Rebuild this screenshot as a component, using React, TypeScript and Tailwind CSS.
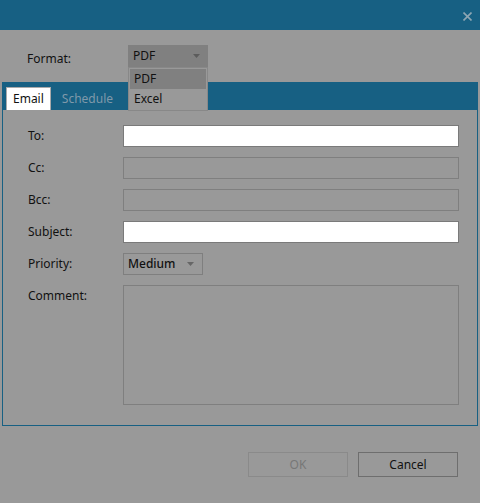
import { useState } from "react";

const fieldRow = "flex items-center h-[22px]";
const label = "w-[95px] shrink-0 text-[12px] text-[#111]";

export default function App() {
  const [format, setFormat] = useState("PDF");
  const [open, setOpen] = useState(true);

  return (
    <div
      className="relative h-[503px] w-[480px] overflow-hidden bg-[#999999] text-[12px] text-[#111]"
      style={{ fontFamily: '"Noto Sans", "Open Sans", sans-serif' }}
    >
      {/* title bar */}
      <div className="flex h-[30px] items-center justify-end bg-[#176083] pr-[8px]">
        <svg width="9" height="9" viewBox="0 0 9 9" className="mt-[2px]">
          <path d="M0.5 0.5 L8.5 8.5 M8.5 0.5 L0.5 8.5" stroke="#8ea6b3" strokeWidth="1.6" />
        </svg>
      </div>

      {/* format row */}
      <div className="relative z-10 mt-[15px] flex h-[22px]">
        <span className="h-[22px] w-[128px] shrink-0 pl-[27px] leading-[28px]">Format:</span>
        <div className="relative">
          <button
            onClick={() => setOpen((v) => !v)}
            className="flex h-[22px] w-[80px] items-center justify-between bg-[#808080] pl-[5px] pr-[8px] text-left"
          >
            <span>{format}</span>
            <svg width="7" height="4" viewBox="0 0 7 4">
              <path d="M0 0 H7 L3.5 4 Z" fill="#5c5c5c" />
            </svg>
          </button>
          {open ? (
            <div className="absolute left-0 top-[22px] w-[80px] border border-[#888] bg-[#999999] p-[1px]">
              {["PDF", "Excel"].map((item) => (
                <div
                  key={item}
                  onClick={() => {
                    setFormat(item);
                    setOpen(false);
                  }}
                  className={`flex h-[20px] cursor-default items-center pl-[4px] ${item === format ? "bg-[#808080]" : ""}`}
                >
                  {item}
                </div>
              ))}
            </div>
          ) : null}
        </div>
      </div>

      {/* tabs panel */}
      <div className="mx-[2px] mt-[15px] flex h-[344px] flex-col border border-[#176083]">
        <div className="flex h-[27px] shrink-0 items-end bg-[#176083] pl-[3px]">
          <div className="flex h-[23px] items-center border border-[#aaa] border-b-0 bg-white px-[6px]">Email</div>
          <div className="flex h-[23px] items-center pl-[11px] text-[#7f99aa]">Schedule</div>
        </div>

        <div className="flex flex-col gap-[10px] pl-[25px] pt-[15px]">
          <div className={fieldRow}>
            <span className={label}>To:</span>
            <input className="h-[22px] w-[336px] border border-[#7a7a7a] bg-white outline-none" />
          </div>
          <div className={fieldRow}>
            <span className={label}>Cc:</span>
            <input disabled className="h-[22px] w-[336px] border border-[#7f7f7f] bg-transparent" />
          </div>
          <div className={fieldRow}>
            <span className={label}>Bcc:</span>
            <input disabled className="h-[22px] w-[336px] border border-[#7f7f7f] bg-transparent" />
          </div>
          <div className={fieldRow}>
            <span className={label}>Subject:</span>
            <input className="h-[22px] w-[336px] border border-[#7a7a7a] bg-white outline-none" />
          </div>
          <div className={fieldRow}>
            <span className={label}>Priority:</span>
            <div className="flex h-[22px] w-[80px] items-center justify-between border border-[#7f7f7f] pl-[4px] pr-[8px] font-medium">
              <span>Medium</span>
              <svg width="7" height="4" viewBox="0 0 7 4">
                <path d="M0 0 H7 L3.5 4 Z" fill="#666" />
              </svg>
            </div>
          </div>
          <div className="flex items-start">
            <span className={`${label} pt-[2px]`}>Comment:</span>
            <textarea disabled className="h-[120px] w-[336px] resize-none border border-[#7f7f7f] bg-transparent" />
          </div>
        </div>
      </div>

      {/* footer buttons */}
      <div className="flex justify-end gap-[10px] pr-[22px] pt-[26px]">
        <button disabled className="h-[25px] w-[100px] border border-[#8a8a8a] text-[#777]">
          OK
        </button>
        <button className="h-[25px] w-[100px] border border-[#6e6e6e]">Cancel</button>
      </div>
    </div>
  );
}
